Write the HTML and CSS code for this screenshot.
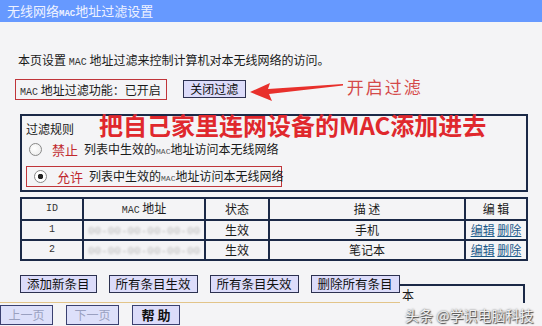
FILE: index.html
```html
<!DOCTYPE html>
<html lang="zh-CN">
<head>
    <meta charset="UTF-8">
    <title>无线网络MAC地址过滤设置</title>
    <link rel="stylesheet" href="styles.css">
</head>
<body>
    <div class="title-bar">无线网络<span class="mono">MAC</span>地址过滤设置</div>

    <div class="intro">本页设置 <span class="mono">MAC</span> 地址过滤来控制计算机对本无线网络的访问。</div>

    <div class="status-row">
        <div class="status-box"><span class="mono">MAC</span> 地址过滤功能：已开启</div>
        <button class="btn">关闭过滤</button>
        <svg class="arrow" width="96" height="24" viewBox="0 0 96 24">
            <path d="M2 14 L22 5 L20 11 L95 6 L95 7.5 L21 16 L24 23 Z" fill="#e8302c"/>
        </svg>
        <span class="note">开启过滤</span>
    </div>

    <div class="rules">
        <div class="rules-head">
            <span>过滤规则</span>
            <span class="big-note">把自己家里连网设备的MAC添加进去</span>
        </div>
        <label class="rule">
            <span class="radio"></span>
            <span class="red">禁止</span>
            <span>列表中生效的<span class="mono small">MAC</span>地址访问本无线网络</span>
        </label>
        <label class="rule checked">
            <span class="radio on"></span>
            <span class="red">允许</span>
            <span>列表中生效的<span class="mono small">MAC</span>地址访问本无线网络</span>
        </label>
    </div>

    <table class="list">
        <tr>
            <th class="c-id mono">ID</th>
            <th class="c-mac"><span class="mono">MAC</span> 地址</th>
            <th class="c-state">状态</th>
            <th class="c-desc">描 述</th>
            <th class="c-edit">编 辑</th>
        </tr>
        <tr>
            <td class="mono">1</td>
            <td><span class="blur">00-00-00-00-00-00</span></td>
            <td>生效</td>
            <td>手机</td>
            <td><a href="#">编辑</a> <a href="#">删除</a></td>
        </tr>
        <tr>
            <td class="mono">2</td>
            <td><span class="blur">00-00-00-00-00-00</span></td>
            <td>生效</td>
            <td>笔记本</td>
            <td><a href="#">编辑</a> <a href="#">删除</a></td>
        </tr>
    </table>

    <div class="actions">
        <button class="btn">添加新条目</button>
        <button class="btn">所有条目生效</button>
        <button class="btn">所有条目失效</button>
        <button class="btn">删除所有条目</button>
        <div class="ghost">本</div>
    </div>

    <div class="pager">
        <button class="btn off">上一页</button>
        <button class="btn off">下一页</button>
        <button class="btn help">帮 助</button>
        <div class="watermark">头条 @学识电脑科技</div>
    </div>
</body>
</html>
```

FILE: styles.css
```css
body {
    margin: 0;
    background-color: #f4f4f6;
    font-family: "Noto Sans CJK SC", "Noto Sans", sans-serif;
    font-size: 12px;
    color: #1a1a1a;
    width: 542px;
    height: 326px;
    overflow: hidden;
    position: relative;
}
.mono {
    font-family: "Liberation Mono", "DejaVu Sans Mono", monospace;
    font-size: 10px;
    color: #333;
}
.mono.small {
    font-size: 8px;
    color: #555;
}
.title-bar {
    height: 22px;
    line-height: 22px;
    background-color: #6699ff;
    color: #eef2ff;
    font-size: 13px;
    padding-left: 7px;
}
.title-bar .mono {
    color: #eef2ff;
    font-size: 9px;
    font-weight: bold;
}
.intro {
    margin: 29px 0 0 18px;
    height: 18px;
    line-height: 18px;
}
.status-row {
    display: flex;
    align-items: center;
    margin: 9px 0 0 15px;
    height: 22px;
}
.status-box {
    border: 1px solid #c0353a;
    height: 19px;
    line-height: 19px;
    padding: 0 5px 0 4px;
}
.btn {
    font-family: "Noto Sans CJK SC", sans-serif;
    font-size: 12px;
    height: 18px;
    line-height: 14px;
    padding: 0 6px;
    border: 1px solid #2c3150;
    background-color: #dcdcfa;
    color: #111;
    white-space: nowrap;
}
.status-row .btn {
    margin-left: 16px;
    width: 63px;
}
.arrow {
    margin: 2px 0 0 2px;
}
.note {
    color: #d44a4a;
    font-size: 17px;
    margin: -6px 0 0 3px;
    letter-spacing: 2px;
}
.rules {
    margin: 14px 0 0 20px;
    width: 508px;
    border: 2px solid #1b2947;
    padding: 0 0 3px 4px;
    box-sizing: border-box;
}
.rules-head {
    display: flex;
    align-items: center;
    height: 25px;
}
.big-note {
    color: #e0282d;
    font-size: 24px;
    line-height: 22px;
    font-weight: bold;
    margin-left: 25px;
    margin-top: -7px;
    white-space: nowrap;
}
.rule {
    display: flex;
    align-items: center;
    height: 17px;
    line-height: 13px;
    gap: 6px;
    padding-left: 3px;
    white-space: nowrap;
}
.rule.checked {
    border: 1px solid #c0353a;
    width: 256px;
    height: 21px;
    box-sizing: border-box;
    margin-top: 8px;
    padding-left: 7px;
}
.radio {
    flex-shrink: 0;
    width: 11px;
    height: 11px;
    border-radius: 50%;
    border: 1px solid #888;
    background: radial-gradient(circle at 40% 40%, #fff 0%, #e8e8e8 100%);
    margin-right: 4px;
}
.radio.on {
    background: radial-gradient(circle, #222 0 2.5px, #fff 3px);
}
.red {
    color: #c0282d;
    font-size: 13px;
}
.list {
    margin: 5px 0 0 20px;
    width: 508px;
    border-collapse: collapse;
    border: 2px solid #1b2947;
}
.list th,
.list td {
    border: 2px solid #1b2947;
    height: 18px;
    padding: 0;
    text-align: center;
    font-weight: normal;
    font-size: 12px;
    line-height: 16px;
}
.list th {
    height: 20px;
}
.list th.mono, .list td.mono {
    font-size: 10px;
}
.c-id { width: 60px; }
.c-mac { width: 120px; }
.c-state { width: 62px; }
.c-edit { width: 60px; }
.blur {
    color: #bbb;
    filter: blur(1.2px);
    font-family: "Liberation Mono", monospace;
    font-size: 11px;
}
.list a {
    color: #1d5a8a;
    font-size: 12px;
}
.actions {
    display: flex;
    gap: 12px;
    margin: 14px 0 0 20px;
    position: relative;
}
.actions .btn {
    font-size: 12.5px;
}
.ghost {
    position: absolute;
    left: 380px;
    top: 9px;
    width: 121px;
    height: 17px;
    border-top: 2px solid #1b2947;
    border-right: 2px solid #1b2947;
    line-height: 18px;
    padding-left: 2px;
}
.pager {
    display: flex;
    gap: 13px;
    margin-top: 9px;
    padding: 2px 0 2px 0;
    border-top: 1px solid #e2c48a;
    width: 400px;
    position: relative;
}
.pager::after {
    content: "";
    position: absolute;
    left: 0;
    bottom: -2px;
    width: 542px;
    border-bottom: 2px solid #e2c48a;
}
.pager .btn {
    width: 53px;
    height: 20px;
    border-color: #3a4070;
}
.pager .btn.off {
    color: #9aa0c0;
    background-color: #dde0fa;
}
.pager .help {
    font-weight: bold;
    font-size: 13px;
    width: 48px;
}
.watermark {
    position: absolute;
    left: 405px;
    top: 2px;
    white-space: nowrap;
    font-size: 14px;
    color: #f0f0f0;
    text-shadow: 0 0 2px #555, 1px 1px 1px #444;
}
```
